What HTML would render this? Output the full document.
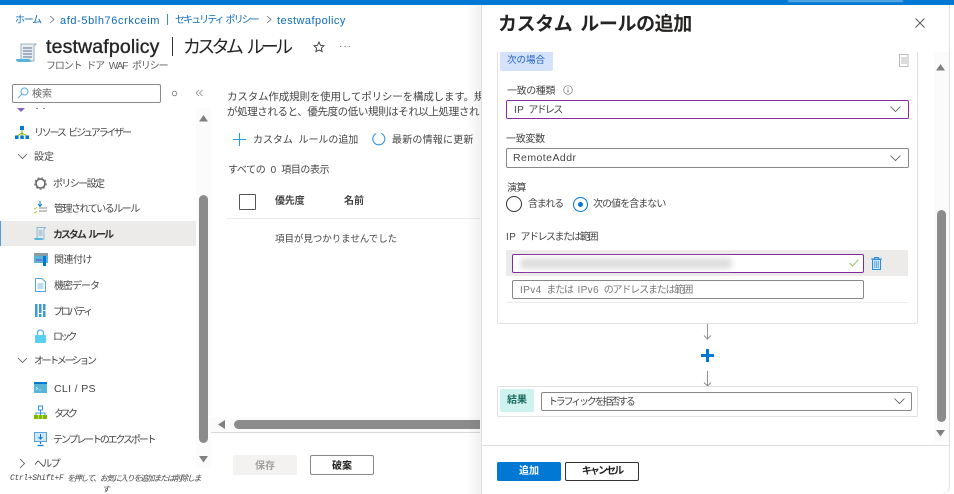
<!DOCTYPE html>
<html lang="ja"><head><meta charset="utf-8"><title>カスタム ルールの追加</title>
<style>
html,body{margin:0;padding:0;width:954px;height:494px;overflow:hidden;background:#fff}
body{position:relative;font-family:"Liberation Sans","Noto Sans CJK JP",sans-serif;color:#323130;font-size:10px}
.a{position:absolute;white-space:nowrap}
.t{position:absolute;white-space:nowrap;line-height:14px;height:14px;letter-spacing:-1.3px;font-size:10px;margin-top:2px;word-spacing:3px}
.n{left:54px;color:#444}
.s{position:absolute}
.b{position:absolute;box-sizing:border-box;border:1px solid #8a8886;border-radius:2px;background:#fff}
.link{color:#0f6cbd}
.l{letter-spacing:.4px}
svg{position:absolute;overflow:visible}
</style></head><body>

<div class="s" style="left:0;top:0;width:954px;height:5px;background:#0078d4"></div>
<div class="s" style="left:788px;top:0;width:115px;height:1.500px;background:rgba(255,255,255,.4);filter:blur(.5px)"></div>

<div class="t link" style="left:15px;top:12px">ホーム</div>
<svg style="left:49px;top:15px" width="6" height="9"><path d="M1 1l4 3.500L1 8" fill="none" stroke="#666" stroke-width=".8"/></svg>
<div class="t link" style="left:60px;top:12px;font-size:11px;letter-spacing:.6px;word-spacing:0">afd-5blh76crkceim</div>
<div class="s" style="left:167px;top:14px;width:1px;height:11px;background:#3b8fd0"></div>
<div class="t link" style="left:175px;top:12px;letter-spacing:-1.950px;word-spacing:2px">セキュリティ ポリシー</div>
<svg style="left:266px;top:15px" width="6" height="9"><path d="M1 1l4 3.500L1 8" fill="none" stroke="#666" stroke-width=".8"/></svg>
<div class="t link" style="left:277px;top:12px;font-size:11px;letter-spacing:.45px;word-spacing:0">testwafpolicy</div>

<svg style="left:16px;top:43px" width="21" height="21" viewBox="0 0 21 21"><path d="M5 1h15l-2 2v15H5z" fill="#e8eef3" stroke="#7f9fb3" stroke-width=".8"/><path d="M7 5h9M7 8h9M7 11h9M7 14h9" stroke="#59718a" stroke-width="1"/><path d="M0 16h14c0 2 1 3 3 3H3c-2 0-3-1-3-3z" fill="#59b4d9"/></svg>
<div class="t" style="left:46px;top:33px;height:24px;line-height:24px;font-size:19.500px;font-weight:400;color:#252423;letter-spacing:.15px;word-spacing:0;-webkit-text-stroke:.35px #252423">testwafpolicy</div>
<div class="s" style="left:172px;top:37px;width:1px;height:19px;background:#333"></div>
<div class="t" style="left:183px;top:33px;height:24px;line-height:24px;font-size:18px;color:#252423;letter-spacing:-3.700px;word-spacing:5px">カスタム ルール</div>
<svg style="left:313px;top:41px" width="12" height="12" viewBox="0 0 12 12"><path d="M6 1l1.500 3.300 3.500.4-2.600 2.400.7 3.600L6 9l-3.100 1.700.7-3.600L1 4.700l3.500-.4z" fill="none" stroke="#333" stroke-width=".9"/></svg>
<div class="a" style="left:339px;top:41px;font-size:10px;letter-spacing:1px;color:#666">···</div>
<div class="t" style="left:46px;top:58px;color:#605e5c;letter-spacing:-1.100px">フロント ドア WAF ポリシー</div>

<div class="b" style="left:12px;top:84px;width:149px;height:19px"></div>
<svg style="left:17px;top:87px" width="12" height="12" viewBox="0 0 12 12"><circle cx="7.500" cy="4.500" r="3.500" fill="none" stroke="#5ea9e0" stroke-width="1"/><path d="M5 7L1 11" stroke="#5ea9e0" stroke-width="1"/></svg>
<div class="t" style="left:32px;top:86px;color:#666;letter-spacing:0">検索</div>
<svg style="left:171px;top:90px" width="7" height="7"><circle cx="3.500" cy="3.500" r="2.300" fill="none" stroke="#777" stroke-width=".8"/></svg>
<svg style="left:195px;top:89px" width="8" height="8"><path d="M4 1L1 4l3 3M7.500 1l-3 3 3 3" fill="none" stroke="#777" stroke-width=".7"/></svg>

<!-- sidebar clip remnants -->
<svg style="left:17px;top:108px" width="8" height="4"><path d="M0 0h8L4 4z" fill="#8661c5"/></svg>
<div class="s" style="left:36px;top:108px;width:2px;height:1px;background:#888"></div>
<div class="s" style="left:43px;top:108px;width:2px;height:1px;background:#888"></div>

<svg style="left:15px;top:126px" width="14" height="14" viewBox="0 0 14 14"><path d="M7 3v7M2 10l5-3 5 3" fill="none" stroke="#7fba00" stroke-width="1"/><rect x="5" y="0" width="4" height="4" fill="#0078d4"/><rect x="0" y="9.500" width="3.500" height="3.500" fill="#0078d4"/><rect x="5.300" y="9.500" width="3.500" height="3.500" fill="#0078d4"/><rect x="10.500" y="9.500" width="3.500" height="3.500" fill="#0078d4"/></svg>
<div class="t n" style="left:34px;top:125px;letter-spacing:-2.200px">リソース ビジュアライザー</div>

<svg style="left:17px;top:153px" width="11" height="7"><path d="M1 1l4.500 4.500L10 1" fill="none" stroke="#555" stroke-width=".8"/></svg>
<div class="t n" style="left:34px;top:149px;letter-spacing:0">設定</div>

<svg style="left:34px;top:177px" width="13" height="13" viewBox="0 0 13 13"><circle cx="6.500" cy="6.500" r="4.500" fill="none" stroke="#666" stroke-width="1.600"/><circle cx="6.500" cy="6.500" r="5.800" fill="none" stroke="#888" stroke-width="1.200" stroke-dasharray="2 2"/></svg>
<div class="t n" style="left:53px;top:176px;letter-spacing:-1.600px">ポリシー設定</div>

<svg style="left:34px;top:201px" width="13" height="14" viewBox="0 0 13 14"><path d="M6 0v5M4 3l2 2.500L8 3" fill="none" stroke="#0078d4" stroke-width="1"/><path d="M5 7h8M5 10h8" stroke="#888"/><path d="M0 7l1 1 2-2M0 11l1 1 2-2" fill="none" stroke="#a4c639" stroke-width=".8"/></svg>
<div class="t n" style="top:201px;letter-spacing:-1.500px">管理されているルール</div>

<div class="s" style="left:0;top:221px;width:196px;height:25px;background:#edebe9"></div>
<div class="s" style="left:0;top:221px;width:1px;height:25px;background:#4aa0e0"></div>
<svg style="left:34px;top:227px" width="12" height="14" viewBox="0 0 12 14"><path d="M3 .5h8.500L10 2v10H3z" fill="#dfe9f0" stroke="#6ea8c8" stroke-width=".7"/><path d="M4.500 4h4M4.500 6h4M4.500 8h4" stroke="#7d97ab" stroke-width=".8"/><path d="M0 11h8c0 1 .6 2 2 2H2c-1 0-2-1-2-2z" fill="#59b4d9"/></svg>
<div class="t n" style="left:53px;top:227px;color:#323130;font-weight:700;letter-spacing:-2.100px">カスタム ルール</div>

<svg style="left:34px;top:253px" width="14" height="13" viewBox="0 0 14 13"><rect width="14" height="3" fill="#8a9ba8"/><rect y="3" width="14" height="7" fill="#59b4d9"/><rect x="9" y="3" width="3" height="10" fill="#0078d4"/><path d="M2 7h6" stroke="#7a3fc0" stroke-width="1"/></svg>
<div class="t n" style="top:252px;letter-spacing:-.5px">関連付け</div>

<svg style="left:35px;top:278px" width="11" height="14" viewBox="0 0 11 14"><path d="M.5.500h6.500L10.500 4v9.500H.500z" fill="#fff" stroke="#59a5d8"/><path d="M2.500 6h6M2.500 8h6M2.500 10h6" stroke="#59a5d8" stroke-width=".8"/></svg>
<div class="t n" style="top:278px;letter-spacing:-1px">機密データ</div>

<svg style="left:35px;top:304px" width="11" height="13" viewBox="0 0 11 13"><rect width="2.500" height="13" fill="#3a9bdc"/><rect x="4" width="2.500" height="13" fill="#3a9bdc"/><rect x="8" width="2.500" height="13" fill="#3a9bdc"/><rect x="4" y="9" width="2.500" height="1" fill="#fff"/><rect x="8" y="6" width="2.500" height="1" fill="#fff"/></svg>
<div class="t n" style="left:53px;top:304px;letter-spacing:-2.300px">プロパティ</div>

<svg style="left:35px;top:329px" width="11" height="14" viewBox="0 0 11 14"><path d="M2.500 6V4a3 3 0 016 0v2" fill="none" stroke="#59b4d9" stroke-width="1.300"/><rect y="6" width="11" height="8" rx="1" fill="#59d0f0"/></svg>
<div class="t n" style="left:53px;top:329px;letter-spacing:-2.800px">ロック</div>

<svg style="left:17px;top:357px" width="11" height="7"><path d="M1 1l4.500 4.500L10 1" fill="none" stroke="#555" stroke-width=".8"/></svg>
<div class="t n" style="left:34px;top:353px;letter-spacing:-2.400px">オートメーション</div>

<svg style="left:34px;top:382px" width="13" height="11" viewBox="0 0 13 11"><rect width="13" height="11" fill="#59b4d9"/><rect width="13" height="2" fill="#0078d4"/><path d="M2 5l1.500 1.500L2 8M5 8h2" fill="none" stroke="#fff" stroke-width=".6"/></svg>
<div class="t n" style="top:380px;font-size:10.500px;letter-spacing:.35px;word-spacing:0">CLI / PS</div>

<svg style="left:34px;top:406px" width="13" height="13" viewBox="0 0 13 13"><rect x="4.500" y="0" width="4" height="4" fill="#fff" stroke="#0078d4" stroke-width=".8"/><path d="M6.500 4v3M2 9V7h9v2M6.500 7v2" fill="none" stroke="#0078d4" stroke-width=".7"/><rect x="0" y="9" width="4" height="4" fill="#7fba00"/><rect x="4.500" y="9" width="4" height="4" fill="#7fba00"/><rect x="9" y="9" width="4" height="4" fill="#7fba00"/></svg>
<div class="t n" style="top:406px;letter-spacing:-3px">タスク</div>

<svg style="left:34px;top:432px" width="13" height="14" viewBox="0 0 13 14"><rect x=".5" y=".5" width="12" height="9" fill="#cfe6f5" stroke="#59a5d8"/><path d="M6.500 2v5M4.500 5l2 2 2-2" fill="none" stroke="#0078d4"/><path d="M6.500 10v2M3.500 13.500h6" stroke="#0078d4" stroke-width="1.200"/></svg>
<div class="t n" style="left:53px;top:432px;letter-spacing:-2.150px">テンプレートのエクスポート</div>

<svg style="left:19px;top:458px" width="7" height="11"><path d="M1 1l4.500 4.500L1 10" fill="none" stroke="#555" stroke-width=".8"/></svg>
<div class="t n" style="left:34px;top:456px;letter-spacing:-1.700px">ヘルプ</div>

<div class="t" style="left:10px;top:470px;font:italic 8px/14px 'Liberation Mono',monospace;color:#444;letter-spacing:-.35px;word-spacing:0">Ctrl+Shift+F</div>
<div class="t" style="left:67px;top:470px;font-size:8px;font-style:italic;color:#444;letter-spacing:-1.300px;word-spacing:0">を押して、お気に入りを追加または削除しま</div>
<div class="t" style="left:102px;top:481px;font-size:8px;font-style:italic;color:#444">す</div>

<!-- sidebar scrollbar -->
<div class="s" style="left:196px;top:108px;width:15px;height:360px;background:#fbfbfb"></div>
<svg style="left:199px;top:115px" width="10" height="7"><path d="M0 6.500L4.500 0 9 6.500z" fill="#808080"/></svg>
<div class="s" style="left:199px;top:195px;width:9px;height:248px;background:#8b8b8b;border-radius:4.500px"></div>
<svg style="left:199px;top:456px" width="10" height="7"><path d="M0 0h9L4.500 6.500z" fill="#808080"/></svg>

<!-- main content -->
<div class="t" style="left:227px;top:88px;color:#444;font-size:10.500px;letter-spacing:-.15px">カスタム作成規則を使用してポリシーを構成します。規則</div>
<div class="t" style="left:227px;top:103px;color:#444;font-size:10.500px;letter-spacing:-.4px">が処理されると、優先度の低い規則はそれ以上処理されません</div>

<svg style="left:233px;top:133px" width="13" height="13"><path d="M6.500 0v13M0 6.500h13" stroke="#2a9ae8" stroke-width="1.100"/></svg>
<div class="t" style="left:253px;top:132px;color:#444;letter-spacing:-.05px">カスタム ルールの追加</div>
<svg style="left:372px;top:132px" width="14" height="14" viewBox="0 0 14 14"><path d="M4 1.600A6 6 0 1 0 9 1.300" fill="none" stroke="#2a8ee0" stroke-width="1"/></svg>
<div class="t" style="left:392px;top:132px;color:#444;letter-spacing:.2px">最新の情報に更新</div>

<div class="t" style="left:228px;top:162px;color:#444;letter-spacing:-.4px">すべての 0 項目の表示</div>

<div class="s" style="left:239px;top:194px;box-sizing:border-box;width:17px;height:16px;border:1px solid #555;border-radius:1px"></div>
<div class="t" style="left:275px;top:193px;color:#444;font-weight:700;letter-spacing:-.2px">優先度</div>
<div class="t" style="left:344px;top:193px;color:#444;font-weight:700;letter-spacing:0">名前</div>
<div class="s" style="left:227px;top:218px;width:253px;height:1px;background:#edebe9"></div>
<div class="t" style="left:275px;top:231px;color:#444;letter-spacing:-.05px;font-size:9.500px">項目が見つかりませんでした</div>

<!-- horizontal scrollbar -->
<div class="s" style="left:211px;top:417px;width:269px;height:15px;background:#fbfbfb"></div>
<svg style="left:218px;top:420px" width="8" height="9"><path d="M7 0v9L0 4.500z" fill="#808080"/></svg>
<div class="s" style="left:234px;top:420px;width:246px;height:9px;background:#8b8b8b;border-radius:4.500px 0 0 4.500px"></div>
<div class="s" style="left:211px;top:432px;width:269px;height:1px;background:#d8d8d8"></div>

<div class="s" style="left:233px;top:455px;width:64px;height:20px;background:#f3f2f1;border-radius:2px;text-align:center;line-height:23px;color:#a19f9d;font-size:10px;font-weight:700">保存</div>
<div class="b" style="left:310px;top:455px;width:64px;height:20px;text-align:center;line-height:21px;color:#201f1e;font-size:10px;font-weight:700">破案</div>

<!-- panel shadow -->
<div class="s" style="left:466px;top:5px;width:15px;height:489px;background:linear-gradient(90deg,rgba(0,0,0,0),rgba(0,0,0,.06))"></div>
<!-- blade -->
<div class="s" style="left:481px;top:5px;width:469px;height:489px;background:#fff;border-left:1px solid #e0e0e0;border-right:1px solid #e0e0e0;border-radius:0 0 8px 0;box-sizing:border-box"></div>
<div class="s" style="left:950px;top:5px;width:4px;height:489px;background:#fff"></div>

<div class="t" style="left:498px;top:10px;height:26px;line-height:26px;font-size:19px;font-weight:700;color:#252423;letter-spacing:-.4px">カスタム ルールの追加</div>
<svg style="left:915px;top:18px" width="10" height="10"><path d="M.5.500l9 9M9.500.500l-9 9" stroke="#555" stroke-width=".9"/></svg>

<!-- condition card -->
<div class="s" style="left:497px;top:52px;box-sizing:border-box;width:421px;height:272px;border:1px solid #e1e1e1;border-top:0;border-radius:0 0 2px 2px"></div>
<div class="s" style="left:500px;top:52px;width:53px;height:19px;background:#d4e2fc;border-radius:0 0 2px 2px;overflow:hidden"><div class="t" style="left:7px;top:0;color:#1f5fbf;letter-spacing:0;font-size:9.500px">次の場合</div></div>
<svg style="left:899px;top:54px" width="10" height="13" viewBox="0 0 10 13"><path d="M.5.500h8.500v12H.5z" fill="none" stroke="#aaa" stroke-width=".8"/><path d="M3 3v7M5 3v7M7 3v7" stroke="#aaa" stroke-width=".8"/></svg>

<div class="t" style="left:507px;top:83px;color:#444;letter-spacing:-.4px">一致の種類</div>
<svg style="left:563px;top:85px" width="10" height="10"><circle cx="5" cy="5" r="4.300" fill="none" stroke="#777" stroke-width=".7"/><path d="M5 4.500v3M5 2.500v1" stroke="#555" stroke-width=".8"/></svg>

<div class="b" style="left:506px;top:100px;width:403px;height:19px;border-color:#8a2da5"></div>
<div class="t" style="left:514px;top:102px;color:#444;letter-spacing:-1.700px"><span class="l">IP</span> アドレス</div>
<svg style="left:890px;top:106px" width="11" height="7"><path d="M.5.500l5 5 5-5" fill="none" stroke="#555" stroke-width=".8"/></svg>

<div class="t" style="left:506px;top:131px;color:#444;letter-spacing:-.3px">一致変数</div>
<div class="b" style="left:506px;top:148px;width:403px;height:20px"></div>
<div class="t" style="left:513px;top:149px;color:#444;font-size:10.500px;letter-spacing:.45px;word-spacing:0">RemoteAddr</div>
<svg style="left:890px;top:155px" width="11" height="7"><path d="M.5.500l5 5 5-5" fill="none" stroke="#555" stroke-width=".8"/></svg>

<div class="t" style="left:507px;top:180px;color:#444;letter-spacing:-.5px">演算</div>
<div class="s" style="left:506px;top:196px;box-sizing:border-box;width:16px;height:16px;border:1px solid #323130;border-radius:50%"></div>
<div class="t" style="left:528px;top:196px;color:#444;letter-spacing:-1.300px">含まれる</div>
<div class="s" style="left:573px;top:197px;box-sizing:border-box;width:15px;height:15px;border:1px solid #0078d4;border-radius:50%"></div>
<div class="s" style="left:578px;top:202px;width:5px;height:5px;background:#0078d4;border-radius:50%"></div>
<div class="t" style="left:593px;top:196px;color:#444;letter-spacing:-.95px">次の値を含まない</div>

<div class="t" style="left:506px;top:229px;color:#444;letter-spacing:-1.500px"><span class="l">IP</span> アドレスまたは範囲</div>

<div class="s" style="left:506px;top:250px;width:402px;height:26px;background:#edebe9"></div>
<div class="b" style="left:512px;top:254px;width:352px;height:19px;border-color:#7d2aa0"></div>
<div class="s" style="left:520px;top:258px;width:212px;height:11px;background:#dedede;filter:blur(3px);border-radius:4px"></div>
<svg style="left:849px;top:259px" width="10" height="8"><path d="M.5 4l3 3L9.500.500" fill="none" stroke="#8cbb4d" stroke-width=".9"/></svg>
<svg style="left:871px;top:257px" width="11" height="13" viewBox="0 0 11 13"><path d="M0 2h11M3.500 2V.5h4V2" fill="none" stroke="#2a8ed8" stroke-width="1"/><path d="M1.500 2.500h8V12.500h-8z" fill="#cfe6f7" stroke="#2a8ed8"/><path d="M3.800 4v7M5.500 4v7M7.200 4v7" stroke="#2a8ed8" stroke-width=".7"/></svg>

<div class="b" style="left:512px;top:280px;width:352px;height:19px"></div>
<div class="t" style="left:520px;top:282px;color:#777;letter-spacing:-1.150px"><span class="l">IPv4</span> または <span class="l">IPv6</span> のアドレスまたは範囲</div>
<div class="s" style="left:506px;top:302px;width:402px;height:1px;background:#edebe9"></div>

<svg style="left:703px;top:324px" width="9" height="16"><path d="M4.500 0v15M1 11.500l3.500 3.500L8 11.500" fill="none" stroke="#888" stroke-width=".9"/></svg>
<svg style="left:701px;top:349px" width="13" height="13"><path d="M6.500 0v13M0 6.500h13" stroke="#0078d4" stroke-width="3"/></svg>
<svg style="left:703px;top:371px" width="9" height="16"><path d="M4.500 0v15M1 11.500l3.500 3.500L8 11.500" fill="none" stroke="#888" stroke-width=".9"/></svg>

<div class="s" style="left:497px;top:386px;box-sizing:border-box;width:421px;height:31px;border:1px solid #e1e1e1;border-radius:2px"></div>
<div class="s" style="left:500px;top:389px;width:34px;height:23px;background:#cef2ee;border-radius:2px;text-align:center;line-height:24px;font-size:10px;font-weight:700;color:#1c6b5f">結果</div>
<div class="b" style="left:541px;top:392px;width:371px;height:19px"></div>
<div class="t" style="left:548px;top:394px;color:#444;letter-spacing:-2.200px">トラフィックを拒否する</div>
<svg style="left:894px;top:398px" width="11" height="7"><path d="M.5.500l5 5 5-5" fill="none" stroke="#555" stroke-width=".8"/></svg>

<!-- blade scrollbar -->
<div class="s" style="left:934px;top:52px;width:15px;height:390px;background:#fbfbfb"></div>
<svg style="left:936px;top:64px" width="10" height="7"><path d="M0 6.500L4.500 0 9 6.500z" fill="#808080"/></svg>
<div class="s" style="left:937px;top:210px;width:9px;height:212px;background:#8b8b8b;border-radius:4.500px"></div>
<svg style="left:936px;top:430px" width="10" height="7"><path d="M0 0h9L4.500 6.500z" fill="#808080"/></svg>

<div class="s" style="left:482px;top:445px;width:467px;height:1px;background:#dcdcdc"></div>
<div class="s" style="left:497px;top:462px;width:64px;height:19px;background:#0078d4;border-radius:2px;text-align:center;line-height:20px;color:#fff;font-size:10px;font-weight:700">追加</div>
<div class="s" style="left:565px;top:462px;box-sizing:border-box;width:74px;height:19px;border:1px solid #323130;border-radius:2px;text-align:center;line-height:18px;color:#201f1e;font-size:10px;font-weight:700;letter-spacing:-1.900px">キャンセル</div>

</body></html>
